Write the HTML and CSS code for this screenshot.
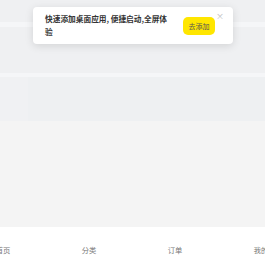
FILE: index.html
```html
<!DOCTYPE html>
<html lang="zh">
<head>
<meta charset="utf-8">
<link rel="stylesheet" href="styles.css">
</head>
<body>
<div class="page">
  <div class="band b1"></div>
  <div class="strip s1"></div>
  <div class="band b2"></div>
  <div class="strip s2"></div>
  <div class="band b3"><div class="b3-left"></div><div class="b3-right"></div></div>
  <div class="rest"></div>
  <nav class="tabbar">
    <div class="tab">首页</div>
    <div class="tab">分类</div>
    <div class="tab">订单</div>
    <div class="tab">我的</div>
  </nav>
</div>
<div class="toast">
  <div class="toast-text">快速添加桌面应用, 便捷启动,全屏体验</div>
  <div class="toast-btn">去添加</div>
  <div class="toast-close">×</div>
</div>
</body>
</html>
```

FILE: styles.css
```css
html, body {
  margin: 0;
  padding: 0;
  width: 265px;
  height: 258px;
  overflow: hidden;
  font-family: "Noto Sans CJK SC", "Noto Sans", sans-serif;
}
.page {
  display: flex;
  flex-direction: column;
  height: 258px;
  background: #f4f4f4;
}
.band { background: #eff0f2; }
.b1 { height: 22px; }
.strip { background: #f5f6f8; }
.s1 { height: 5px; }
.b2 { height: 46px; }
.s2 { height: 4px; }
.b3 { height: 44px; display: flex; }
.b3-left { width: 28px; background: #f0f1f3; }
.b3-right { flex: 1; background: #eef0f2; }
.rest { flex: 1; background: #f4f4f4; }
.tabbar {
  height: 31px;
  background: #fff;
  display: flex;
  width: 344px;
  margin-left: -40px;
}
.tab {
  flex: 1;
  text-align: center;
  font-size: 7.3px;
  color: #777;
  padding-top: 19px;
  line-height: 9px;
}
.toast {
  position: absolute;
  left: 33px;
  top: 7px;
  width: 200px;
  height: 37px;
  box-sizing: border-box;
  background: #fff;
  border-radius: 4px;
  box-shadow: 0 2px 8px rgba(0,0,0,0.12);
  display: flex;
  align-items: center;
  padding: 0 0 0 12px;
}
.toast-text {
  width: 123px;
  flex: none;
  font-size: 7.7px;
  line-height: 12.5px;
  color: #333;
  font-weight: 600;
}
.toast-btn {
  flex: none;
  margin-left: 15px;
  width: 32px;
  height: 18px;
  border-radius: 5px;
  background: #ffe600;
  color: #555;
  font-size: 7px;
  display: flex;
  align-items: center;
  justify-content: center;
  margin-top: 1px;
}
.toast-close {
  position: absolute;
  right: 9px;
  top: 4px;
  font-size: 8px;
  color: #bbb;
  line-height: 10px;
}
```
